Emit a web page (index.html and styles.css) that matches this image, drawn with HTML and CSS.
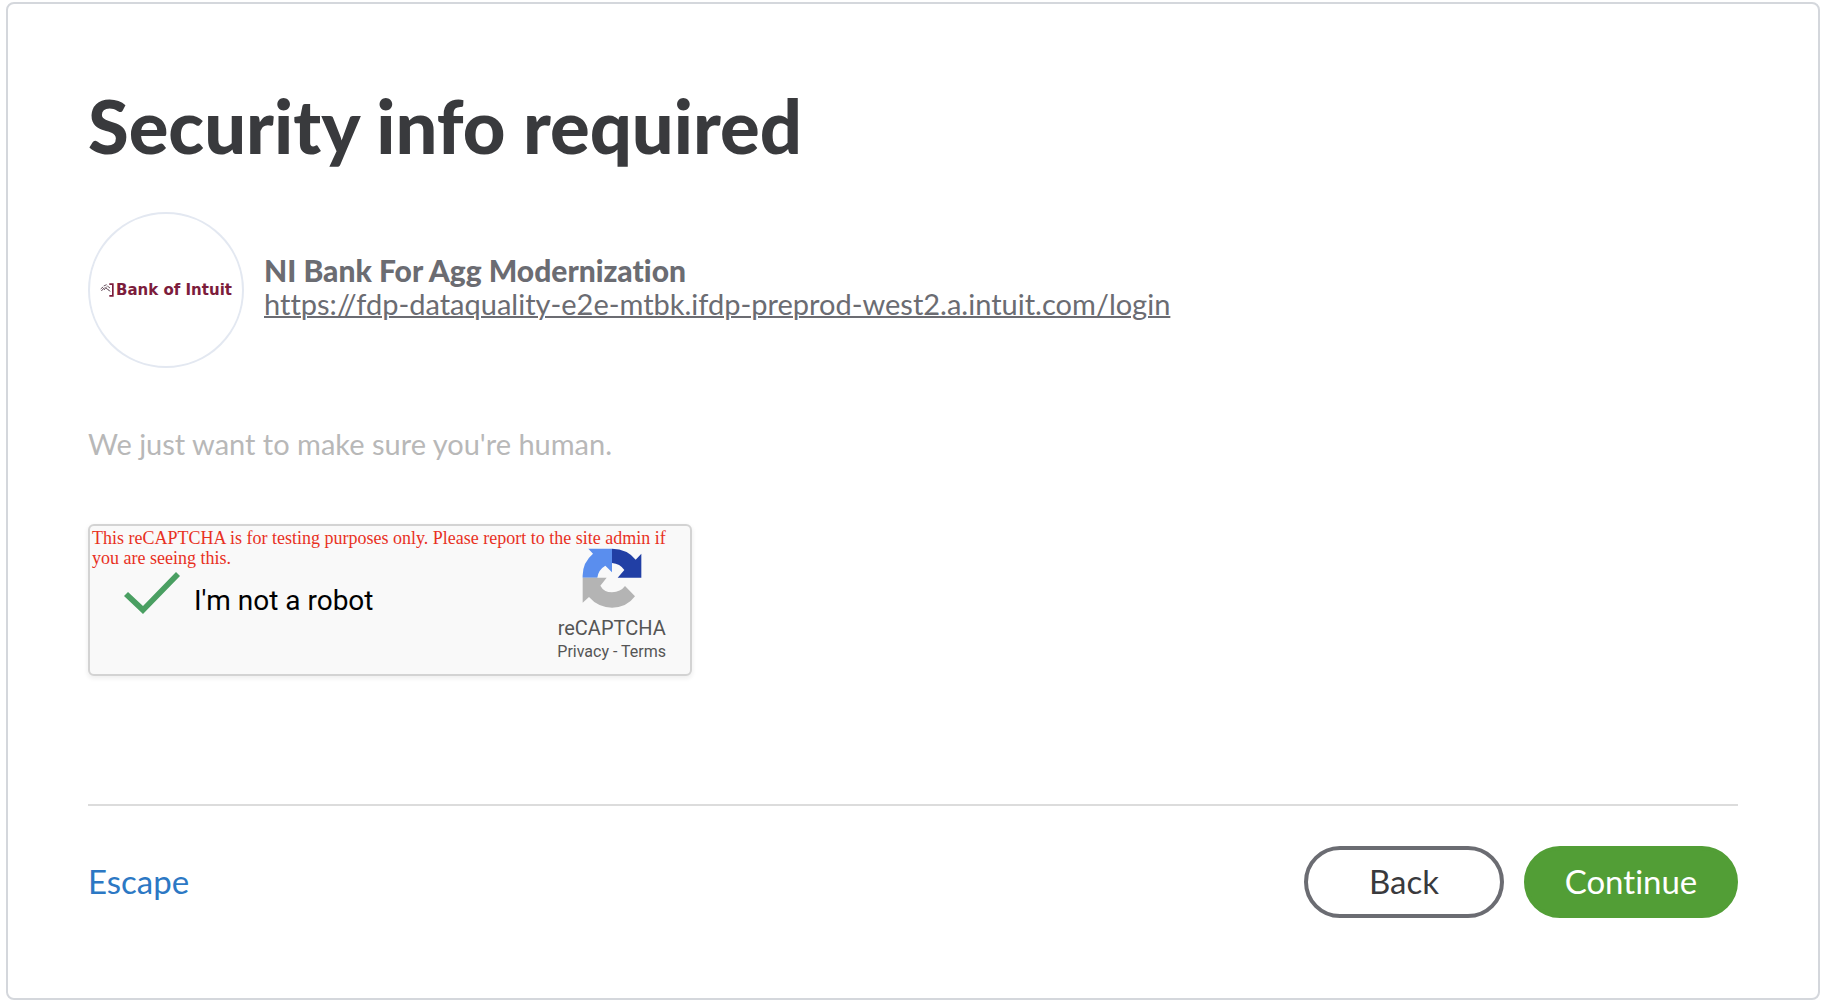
FILE: index.html
```html
<!DOCTYPE html>
<html lang="en">
<head>
<meta charset="utf-8">
<meta name="viewport" content="width=device-width, initial-scale=1">
<title>Security info required</title>
<link rel="stylesheet" href="styles.css">
</head>
<body>
<main class="card">
  <h1 class="title">Security info required</h1>

  <section class="bank">
    <div class="bank-logo">
      <svg class="bank-mark" viewBox="0 0 42 42" aria-hidden="true">
        <path d="M28 1H41V41H28V36H36V6H28Z" fill="#7c1c3c"/>
        <path d="M2 18L9 12M4 24L13 14M11 9L20 5M12 21L20 11M17 15L26 21M22 9L30 15M24 20L31 25" stroke="#6b5562" stroke-width="3" fill="none"/>
      </svg>
      <span class="bank-wordmark">Bank of Intuit</span>
    </div>
    <div class="bank-text">
      <h2 class="bank-name">NI Bank For Agg Modernization</h2>
      <a class="bank-url" href="https://fdp-dataquality-e2e-mtbk.ifdp-preprod-west2.a.intuit.com/login">https://fdp-dataquality-e2e-mtbk.ifdp-preprod-west2.a.intuit.com/login</a>
    </div>
  </section>

  <p class="prompt">We just want to make sure you're human.</p>

  <form class="form">
    <div class="captcha">
      <p class="captcha-warning">This reCAPTCHA is for testing purposes only. Please report to the site admin if you are seeing this.</p>
      <label class="robot" for="robot"><input class="robot-check" id="robot" type="checkbox" checked><span>I'm not a robot</span></label>
      <div class="brand">
        <svg class="brand-logo" viewBox="546 115 180 180" aria-hidden="true">
          <path d="M548 204A88 88 0 0 1 579 132L565 117H636V188L616 168Q595 180 592 204Z" fill="#5a8eee"/>
          <path d="M636 117Q682 118 707 150L724 132V204H653L673 181Q660 162 636 160Z" fill="#213fa5"/>
          <path d="M548 204H620L601 228Q612 248 636 248Q662 247 675 229L705 260Q680 294 636 294Q594 293 567 262L548 279Z" fill="#b4b4b4"/>
        </svg>
        <span class="brand-name">reCAPTCHA</span>
        <span class="brand-links"><a href="#privacy">Privacy</a> - <a href="#terms">Terms</a></span>
      </div>
    </div>

    <div class="actions">
      <a class="escape" href="#escape">Escape</a>
      <button class="btn btn-secondary" type="button">Back</button>
      <button class="btn btn-primary" type="submit">Continue</button>
    </div>
  </form>
</main>
</body>
</html>
```
FILE: styles.css
```css
* { box-sizing: border-box; }

body {
  margin: 0;
  padding: 2px 12px 4px 6px;
  background: #fff;
  color: #393a3d;
  font-family: Lato, "Open Sans", sans-serif;
  font-variant-ligatures: none;
}

h1, h2, p { margin: 0; }

.card {
  padding: 78px 80px 80px;
  border: 2px solid #d4d7dc;
  border-radius: 8px;
}

.title {
  font-size: 74px;
  line-height: 88px;
  font-weight: 900;
}

.bank {
  display: flex;
  align-items: center;
  gap: 20px;
  margin-top: 42px;
  color: #6b6c72;
}

.bank-logo {
  display: flex;
  flex: none;
  align-items: center;
  justify-content: center;
  gap: 2px;
  width: 156px;
  height: 156px;
  border: 2px solid #e3e8f1;
  border-radius: 50%;
}

.bank-mark { width: 14px; height: 14px; }

.bank-wordmark {
  color: #7c1c3c;
  font: bold 15px/20px "DejaVu Sans", sans-serif;
  white-space: nowrap;
}

.bank-text {
  display: flex;
  flex-direction: column;
  min-width: 0;
  padding-bottom: 6px;
}

.bank-name {
  font-size: 30px;
  line-height: 34px;
  font-weight: 900;
}

.bank-url {
  color: inherit;
  font-size: 29px;
  line-height: 34px;
  text-decoration-thickness: 2px;
  overflow-wrap: anywhere;
}

.prompt {
  margin-top: 59px;
  color: #b8b8b8;
  font-size: 29px;
  line-height: 34px;
}

.captcha {
  display: grid;
  grid-template-columns: 1fr auto;
  align-content: start;
  align-items: start;
  width: 604px;
  max-width: 100%;
  height: 152px;
  margin-top: 63px;
  padding: 2px;
  border: 2px solid #d3d3d3;
  border-radius: 6px;
  background: #f9f9f9;
  box-shadow: 0 2px 4px 1px rgba(0, 0, 0, 0.06);
}

.captcha-warning {
  grid-column: 1 / -1;
  height: 16px;
  color: #e8311f;
  font: 18px/20px "Liberation Serif", serif;
}

.robot {
  display: flex;
  align-items: flex-start;
  gap: 14px;
  margin: 28px 0 0 32px;
  color: #000;
  font: 28px/58px Roboto, sans-serif;
}

.robot-check {
  appearance: none;
  width: 56px;
  height: 42px;
  margin: 0;
  background: #4a9f62;
  clip-path: polygon(0 24px, 4px 20px, 19px 34px, 52px 0, 56px 4px, 19px 42px);
}

.brand {
  display: flex;
  flex-direction: column;
  align-items: center;
  margin: 4px 22px 0 0;
  color: #555;
  font-family: Roboto, sans-serif;
}

.brand-logo { width: 60px; height: 60px; }

.brand-name {
  margin-top: 8px;
  font-size: 20px;
  line-height: 24px;
}

.brand-links {
  font-size: 16px;
  line-height: 24px;
}

.brand-links a {
  color: inherit;
  text-decoration: none;
}

.actions {
  display: flex;
  align-items: center;
  gap: 20px;
  margin-top: 128px;
  padding-top: 40px;
  border-top: 2px solid #dcdcdc;
}

.escape {
  margin-right: auto;
  padding-bottom: 2px;
  color: #2c78c4;
  font-size: 33px;
  line-height: 40px;
  text-decoration: none;
}

.btn {
  height: 72px;
  padding: 0 32px 2px;
  border: 4px solid #6b6c72;
  border-radius: 36px;
  background: #fff;
  color: #393a3d;
  font: 33px/40px Lato, "Open Sans", sans-serif;
  font-variant-ligatures: none;
}

.btn-secondary { min-width: 200px; }

.btn-primary {
  min-width: 214px;
  border-color: #529e36;
  background: #529e36;
  color: #fff;
}
```
